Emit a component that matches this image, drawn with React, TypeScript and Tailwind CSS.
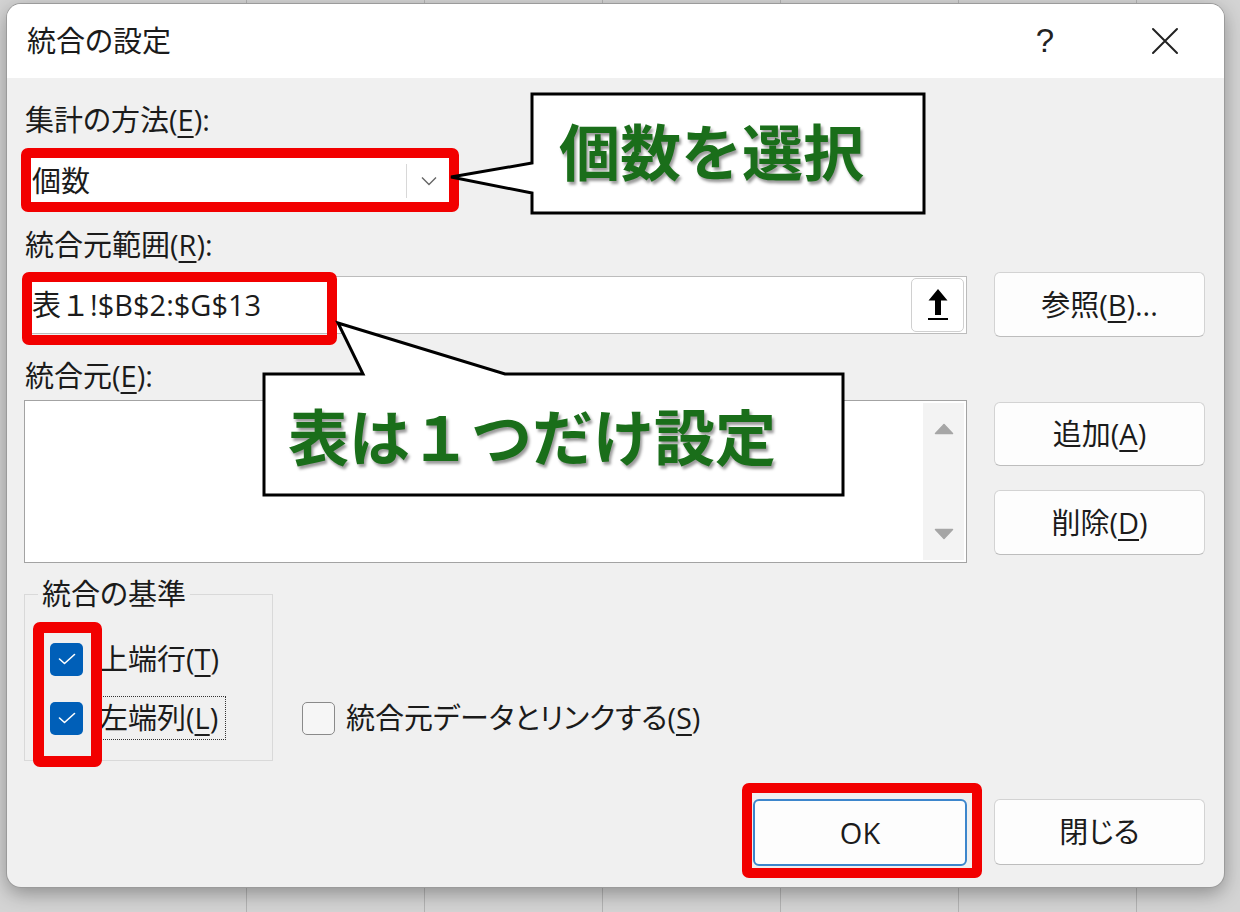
import React from "react";

const UI =
  "font-['Open_Sans','Noto_Sans_CJK_JP',sans-serif] [font-feature-settings:'palt'] text-[29px] text-[#1b1b1b]";

function U({ c }: { c: string }) {
  return (
    <span className="underline decoration-[1.5px] underline-offset-[5px]">{c}</span>
  );
}

function Checked() {
  return (
    <div className="w-[33px] h-[33px] shrink-0 rounded-[5px] bg-[#005fb8] flex items-center justify-center">
      <svg width="18" height="12" viewBox="0 0 18 12">
        <path
          d="M1.5 6 L6.5 10.5 L16.5 1.5"
          fill="none"
          stroke="white"
          strokeWidth="1.6"
          strokeLinecap="round"
          strokeLinejoin="round"
        />
      </svg>
    </div>
  );
}

function Btn({ children, cls }: { children: React.ReactNode; cls: string }) {
  return (
    <div
      className={
        "flex items-center justify-center rounded-[6px] bg-[#fdfdfd] border border-[#d3d3d3] border-b-[#bdbdbd] " +
        cls
      }
    >
      {children}
    </div>
  );
}

export default function App() {
  return (
    <div className="relative w-[1240px] h-[912px] overflow-hidden bg-[#d4d4d4] bg-[repeating-linear-gradient(90deg,#d4d4d4_0px,#d4d4d4_177px,#b3b3b3_177px,#b3b3b3_178px)] bg-[position:69px_0] pt-[4px] pl-[7px]">
      <div
        className={
          "w-[1217px] h-[883px] rounded-[14px] bg-[#f0f0f0] overflow-hidden flex flex-col shadow-[0_0_0_1px_#9b9b9b,0_6px_20px_rgba(0,0,0,0.35)] " +
          UI
        }
      >
        {/* title bar */}
        <div className="h-[74px] shrink-0 bg-white flex items-center pl-[20px] pr-[29px]">
          <span className="leading-[36px]">統合の設定</span>
          <div className="ml-auto flex items-center gap-[60px]">
            <div className="w-[60px] h-[60px] flex items-center justify-center text-[33px] font-normal text-[#222] font-['Liberation_Sans',sans-serif]">
              ?
            </div>
            <div className="w-[60px] h-[60px] flex items-center justify-center">
              <svg width="28" height="28" viewBox="0 0 28 28">
                <path
                  d="M2 2 L26 26 M26 2 L2 26"
                  stroke="#222"
                  strokeWidth="2"
                  strokeLinecap="round"
                />
              </svg>
            </div>
          </div>
        </div>

        {/* body */}
        <div className="flex flex-col pl-[17px] pr-[19px]">
          <div className="mt-[24px] h-[36px] leading-[36px] pl-[1px]">
            集計の方法(<U c="E" />):
          </div>

          <div className="mt-[18px] w-[428px] h-[50px] bg-white border border-[#bdbdbd] rounded-[4px] flex items-center">
            <span className="pl-[7px] leading-[36px] flex-1">個数</span>
            <div className="w-px h-[34px] bg-[#d8d8d8]" />
            <div className="w-[44px] h-full flex items-center justify-center">
              <svg width="16" height="10" viewBox="0 0 16 10">
                <path
                  d="M1 1.5 L8 8.5 L15 1.5"
                  fill="none"
                  stroke="#666"
                  strokeWidth="1.4"
                />
              </svg>
            </div>
          </div>

          <div className="mt-[21px] h-[36px] leading-[36px] pl-[1px]">
            統合元範囲(<U c="R" />):
          </div>

          <div className="mt-[9px] h-[65px] flex items-center gap-[27px]">
            <div className="w-[943px] h-[58px] bg-white border-[1.5px] border-[#bcbcbc] flex items-center pr-[2px]">
              <span className="pl-[7px] leading-[36px] flex-1 [font-feature-settings:normal]">
                表１!$B$2:$G$13
              </span>
              <div className="w-[53px] h-[54px] rounded-[5px] bg-white border border-[#d0d0d0] flex items-center justify-center">
                <svg width="24" height="34" viewBox="0 0 24 34">
                  <path
                    d="M12 1 L21.5 12.5 L15 12.5 L15 27 L9 27 L9 12.5 L2.5 12.5 Z"
                    fill="#000"
                  />
                  <rect x="2" y="30" width="20" height="2" fill="#000" />
                </svg>
              </div>
            </div>
            <Btn cls="w-[211px] h-[65px]">
              <span className="leading-[36px]">
                参照(<U c="B" />)...
              </span>
            </Btn>
          </div>

          <div className="mt-[21px] h-[36px] leading-[36px] pl-[1px]">
            統合元(<U c="E" />):
          </div>

          <div className="mt-[6px] flex items-start gap-[27px]">
            <div className="w-[943px] h-[163px] bg-white border-[1.5px] border-[#a3a3a3] flex justify-end p-[2px]">
              <div className="w-[41px] h-full bg-[#f3f3f3] flex flex-col items-center justify-between py-[20px]">
                <svg width="20" height="12" viewBox="0 0 20 12">
                  <path
                    d="M10 1.5 L18.5 10.5 L1.5 10.5 Z"
                    fill="#a6a6a6"
                    stroke="#a6a6a6"
                    strokeWidth="1.5"
                    strokeLinejoin="round"
                  />
                </svg>
                <svg width="20" height="12" viewBox="0 0 20 12">
                  <path
                    d="M10 10.5 L18.5 1.5 L1.5 1.5 Z"
                    fill="#a6a6a6"
                    stroke="#a6a6a6"
                    strokeWidth="1.5"
                    strokeLinejoin="round"
                  />
                </svg>
              </div>
            </div>
            <div className="flex flex-col pt-[2px] gap-[24px]">
              <Btn cls="w-[211px] h-[64px]">
                <span className="leading-[36px]">
                  追加(<U c="A" />)
                </span>
              </Btn>
              <Btn cls="w-[211px] h-[65px]">
                <span className="leading-[36px]">
                  削除(<U c="D" />)
                </span>
              </Btn>
            </div>
          </div>

          <div className="mt-[13px] flex items-end">
            <fieldset className="w-[249px] h-[185px] border border-[#d9d9d9] ml-[0px] px-0 pb-0">
              <legend className="ml-[13px] px-[4px] leading-[36px]">統合の基準</legend>
              <div className="flex flex-col pl-[25px] pt-[25px] gap-[15px]">
                <div className="flex items-center h-[44px] gap-[8px]">
                  <Checked />
                  <span className="h-[44px] px-[7px] leading-[42px] border border-transparent">
                    上端行(<U c="T" />)
                  </span>
                </div>
                <div className="flex items-center h-[44px] gap-[8px]">
                  <Checked />
                  <span className="h-[44px] px-[7px] leading-[42px] border border-dotted border-[#333]">
                    左端列(<U c="L" />)
                  </span>
                </div>
              </div>
            </fieldset>
            <div className="ml-[29px] mb-[21px] h-[44px] flex items-center gap-[11px]">
              <div className="w-[33px] h-[33px] rounded-[5px] border-[1.5px] border-[#8a8a8a] bg-[#f6f6f6]" />
              <span className="leading-[36px]">
                統合元データとリンクする(<U c="S" />)
              </span>
            </div>
          </div>

          <div className="mt-[38px] flex justify-end gap-[27px]">
            <div className="w-[214px] h-[67px] rounded-[6px] bg-[#fdfdfd] border-2 border-[#3c86cc] flex items-center justify-center">
              <span className="leading-[36px]">OK</span>
            </div>
            <Btn cls="w-[211px] h-[66px]">
              <span className="leading-[36px]">閉じる</span>
            </Btn>
          </div>
        </div>
      </div>

      {/* red highlight frames */}
      <div className="absolute left-[21px] top-[148px] w-[438px] h-[64px] border-[10px] border-[#f20000] rounded-[7px]" />
      <div className="absolute left-[22px] top-[272px] w-[315px] h-[73px] border-[10px] border-[#f20000] rounded-[7px]" />
      <div className="absolute left-[33px] top-[622px] w-[69px] h-[145px] border-[11px] border-[#f20000] rounded-[7px]" />
      <div className="absolute left-[742px] top-[783px] w-[240px] h-[95px] border-[10px] border-[#f20000] rounded-[7px]" />

      {/* callouts */}
      <svg
        className="absolute left-0 top-0 pointer-events-none"
        width="1240"
        height="912"
        viewBox="0 0 1240 912"
      >
        <path
          d="M532 94 L924 94 L924 213 L532 213 L532 193 L451 177 L532 163 Z"
          fill="white"
          stroke="black"
          strokeWidth="3"
          strokeLinejoin="miter"
        />
        <path
          d="M264 374 L363 374 L338 323 L505 374 L843 374 L843 495 L264 495 Z"
          fill="white"
          stroke="black"
          strokeWidth="3"
          strokeLinejoin="miter"
        />
      </svg>
      <div className="absolute left-[559px] top-[117px] h-[66px] leading-[66px] text-[61px] font-bold text-[#1a6e1a] font-['Noto_Sans_CJK_JP',sans-serif] [text-shadow:2px_3px_3px_rgba(0,0,0,0.4)] whitespace-nowrap">
        個数を選択
      </div>
      <div className="absolute left-[288px] top-[402px] h-[66px] leading-[66px] text-[61px] font-bold text-[#1a6e1a] font-['Noto_Sans_CJK_JP',sans-serif] [text-shadow:2px_3px_3px_rgba(0,0,0,0.4)] whitespace-nowrap">
        表は１つだけ設定
      </div>
    </div>
  );
}
